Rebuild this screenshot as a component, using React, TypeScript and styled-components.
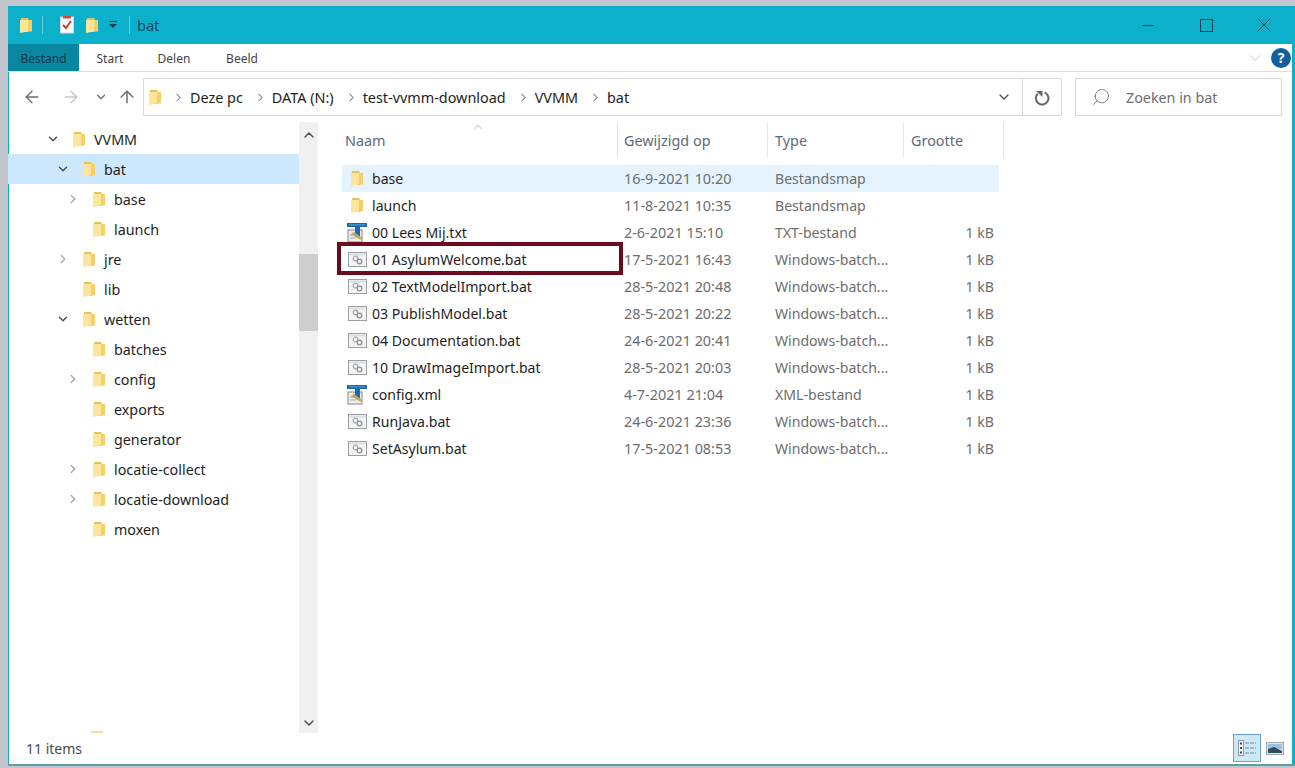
import React from 'react'
import styled, { createGlobalStyle } from 'styled-components'
import { ArrowLeft, ArrowRight, ArrowUp, ChevronDown, ChevronRight, ChevronUp, Search, X } from 'lucide-react'

const GlobalStyle = createGlobalStyle`
  html, body { margin: 0; padding: 0; height: 100%; }
  body {
    background: #c3c7cd;
    font-family: 'Noto Sans', 'Open Sans', sans-serif;
    overflow: hidden;
  }
  #root { height: 100%; }
`

const Desktop = styled.div`
  height: 768px;
  box-sizing: border-box;
  padding: 6px 0 2px 8px;
`

const Window = styled.div`
  height: 100%;
  display: flex;
  flex-direction: column;
  background: #0cb0cb;
  padding-right: 3px;
  border-bottom: 2px solid #5e9ea8;
  box-sizing: border-box;
`

const TitleBar = styled.div`
  height: 38px;
  flex: none;
  display: flex;
  align-items: center;
  margin-right: -3px;
  padding: 0 2px 0 12px;
  box-sizing: border-box;
  color: #0b4a60;
  font-size: 14.5px;
`

const TitleDivider = styled.span<{ $left: number; $right: number }>`
  width: 1px;
  height: 18px;
  background: #63cfe0;
  margin: 0 ${p => p.$right}px 0 ${p => p.$left}px;
`

const TitleGap = styled.span<{ $width: number }>`
  width: ${p => p.$width}px;
`

const TitleSpacer = styled.div`
  flex: 1;
`

const WindowButton = styled.div`
  width: 58px;
  display: flex;
  justify-content: center;
  color: #123f50;
`

const Body = styled.div`
  flex: 1;
  min-height: 0;
  display: flex;
  flex-direction: column;
  background: #fff;
  box-shadow: inset 1px 0 #0cb0cb;
`

const Ribbon = styled.div`
  height: 28px;
  flex: none;
  display: flex;
  align-items: stretch;
  box-sizing: border-box;
  font-size: 12px;
  color: #444;
  border-bottom: 1px solid #dfdfdf;
`

const RibbonTab = styled.div<{ $active?: boolean; $width: number }>`
  width: ${p => p.$width}px;
  display: flex;
  align-items: center;
  justify-content: center;
  padding-top: 2px;
  box-sizing: border-box;
  background: ${p => (p.$active ? '#0a87a0' : 'transparent')};
  color: ${p => (p.$active ? '#0f3a48' : '#444')};
`

const RibbonRight = styled.div`
  margin-left: auto;
  display: flex;
  align-items: center;
  gap: 7px;
  color: #c4c4c4;
`

const HelpBadge = styled.div`
  width: 20px;
  height: 20px;
  border-radius: 50%;
  background: #14609f;
  color: #fff;
  font-size: 14px;
  font-weight: 700;
  display: flex;
  align-items: center;
  justify-content: center;
  margin-right: 1px;
`

const NavBar = styled.div`
  height: 50px;
  flex: none;
  box-sizing: border-box;
  padding: 6px 0 6px 0;
  display: flex;
  align-items: stretch;
`

const NavButtons = styled.div`
  width: 135px;
  flex: none;
  display: flex;
  align-items: center;
`

const NavButton = styled.div<{ $width: number; $color: string }>`
  width: ${p => p.$width}px;
  display: flex;
  justify-content: center;
  color: ${p => p.$color};
`

const AddressBox = styled.div`
  width: 919px;
  flex: none;
  display: flex;
  align-items: center;
  border: 1px solid #d9d9d9;
  box-sizing: border-box;
  font-size: 14.4px;
  color: #1e1e1e;
  padding-left: 5px;
`

const Crumb = styled.span`
  margin-left: 5px;
`

const CrumbSep = styled.span`
  display: flex;
  margin-left: 11px;
  color: #555;
`

const AddressEnd = styled.div`
  margin-left: auto;
  display: flex;
  align-items: stretch;
  height: 100%;
  color: #555;
`

const AddressDrop = styled.div`
  width: 36px;
  display: flex;
  align-items: center;
  justify-content: center;
`

const Refresh = styled.div`
  width: 38px;
  display: flex;
  align-items: center;
  justify-content: center;
  border-left: 1px solid #d9d9d9;
  color: #666;
`

const SearchBox = styled.div`
  width: 207px;
  flex: none;
  margin-left: 13px;
  border: 1px solid #d9d9d9;
  box-sizing: border-box;
  display: flex;
  align-items: center;
  padding-left: 15px;
  gap: 15px;
  font-size: 14.3px;
  color: #6d6d6d;
`

const MirroredIcon = styled.span`
  display: flex;
  transform: scaleX(-1);
  color: #777;
`

const Main = styled.div`
  flex: 1;
  min-height: 0;
  display: flex;
`

const Tree = styled.div`
  width: 291px;
  flex: none;
  overflow: hidden;
  padding-top: 2px;
  box-sizing: border-box;
`

const TreeRow = styled.div<{ $depth: number; $selected?: boolean }>`
  height: 30px;
  display: flex;
  align-items: center;
  padding-left: ${p => 38 + p.$depth * 10}px;
  background: ${p => (p.$selected ? '#cce8ff' : 'transparent')};
  font-size: 14.3px;
  color: #1e1e1e;
`

const TreeChevron = styled.span<{ $open?: boolean }>`
  width: 14px;
  height: 16px;
  flex: none;
  display: flex;
  justify-content: center;
  color: ${p => (p.$open ? '#3c4a55' : '#a6a6a6')};
`

const TreeFolder = styled.span`
  display: flex;
  margin: 0 9px 0 13px;
`

const TreeStub = styled.div`
  height: 2px;
  width: 12px;
  margin: 187px 0 0 83px;
  background: #f5e08e;
`

const ScrollBar = styled.div`
  width: 19px;
  flex: none;
  background: #f0f0f0;
  display: flex;
  flex-direction: column;
  align-items: center;
  color: #505050;
`

const ScrollEnd = styled.div<{ $height: number }>`
  height: ${p => p.$height}px;
  flex: none;
  display: flex;
  align-items: center;
  justify-content: center;
`

const ScrollThumb = styled.div`
  width: 100%;
  height: 77px;
  margin-top: 106px;
  margin-bottom: auto;
  background: #cdcdcd;
`

const List = styled.div`
  flex: 1;
  padding-left: 24px;
`

const Grid = styled.div`
  display: grid;
  grid-template-columns: 275px 150px 136px 96px;
  width: 657px;
`

const Header = styled.div`
  display: grid;
  grid-template-columns: 276px 150px 136px 100px;
  height: 43px;
  align-items: start;
`

const HeaderCell = styled.div<{ $pad: number }>`
  position: relative;
  height: 34px;
  margin-top: 1px;
  display: flex;
  align-items: center;
  box-sizing: border-box;
  padding-left: ${p => p.$pad}px;
  border-right: 1px solid #e5e5e5;
  font-size: 14.4px;
  color: #5a6b7b;
`

const SortCaret = styled.span`
  position: absolute;
  left: 129px;
  top: -3px;
  display: flex;
  color: #8e8e8e;
`

const Row = styled(Grid)<{ $hovered?: boolean; $marked?: boolean }>`
  position: relative;
  height: 27px;
  align-items: center;
  background: ${p => (p.$hovered ? '#e5f3ff' : 'transparent')};
  font-size: 14.1px;
  color: #6d6d6d;
  ${p =>
    p.$marked
      ? `&::after {
    content: '';
    position: absolute;
    left: -5px;
    top: -4px;
    width: 286px;
    height: 33px;
    box-sizing: border-box;
    border: 4px solid #6e0a1e;
  }`
      : ''}
`

const NameCell = styled.div`
  display: flex;
  align-items: center;
  color: #1e1e1e;
`

const IconSlot = styled.span`
  width: 20px;
  margin: 0 5px;
  display: flex;
  justify-content: center;
`

const DateCell = styled.div`
  padding-left: 7px;
  font-size: 14.4px;
`

const TypeCell = styled.div`
  padding-left: 8px;
`

const SizeCell = styled.div`
  text-align: right;
  padding-right: 5px;
`

const StatusBar = styled.div`
  height: 31px;
  flex: none;
  display: flex;
  align-items: center;
  box-sizing: border-box;
  padding: 0 3px 1px 18px;
  font-size: 14px;
  color: #4a4a4a;
`

const ViewButtons = styled.div`
  margin-left: auto;
  display: flex;
  align-items: center;
`

const ViewButton = styled.div<{ $active?: boolean }>`
  width: 28px;
  height: 28px;
  box-sizing: border-box;
  display: flex;
  align-items: center;
  justify-content: center;
  background: ${p => (p.$active ? '#cde8f6' : 'transparent')};
  border: 1px solid ${p => (p.$active ? '#6aa5bd' : 'transparent')};
`

const FolderIcon = () => (
  <svg width="12" height="17" viewBox="0 0 12 17">
    <path d="M1 1h7l1 2v12H1z" fill="#e6c25a" />
    <path d="M0 3h8v11.500l-8 1.500z" fill="#fde59b" />
    <path d="M8 3h4v11.500H8z" fill="#f6cf69" />
  </svg>
)

const BatIcon = () => (
  <svg width="19" height="15" viewBox="0 0 19 15">
    <rect x="0.5" y="0.500" width="18" height="14" fill="#f4f4f4" stroke="#9a9fa4" />
    <rect x="1.500" y="1.500" width="16" height="2" fill="#d9dde0" />
    <circle cx="7.500" cy="6.500" r="2.300" fill="none" stroke="#a6abb0" strokeWidth="1.300" />
    <circle cx="11.500" cy="9.500" r="2.300" fill="none" stroke="#8b9196" strokeWidth="1.300" />
  </svg>
)

const NotepadIcon = () => (
  <svg width="20" height="20" viewBox="0 0 20 20">
    <rect x="1" y="7" width="14" height="12" fill="#eceff1" stroke="#7d858c" />
    <path d="M0 0h20v4h-7v9H8V4H0z" fill="#1e6aa8" />
    <path d="M2 1h16v1.500H2z" fill="#3c91d0" />
    <path d="M4 11l8 5 3 1-1-3-7-5z" fill="#c9a64b" />
    <path d="M3 12h7M3 15h6" stroke="#9aa3aa" />
  </svg>
)

const ChecklistIcon = () => (
  <svg width="14" height="18" viewBox="0 0 14 18">
    <rect x="0.500" y="1" width="13" height="16" fill="#fdfdfd" stroke="#d5d5d5" />
    <rect x="3" y="0" width="8" height="2.500" fill="#d04a3f" />
    <path d="M3 9l3 3 5-7" fill="none" stroke="#c8352e" strokeWidth="1.800" />
  </svg>
)

const DropArrowIcon = () => (
  <svg width="10" height="8" viewBox="0 0 10 8">
    <path d="M1 0.500h8" stroke="#123f50" />
    <path d="M1 3h8L5 7z" fill="#123f50" />
  </svg>
)

const MinimizeIcon = () => (
  <svg width="12" height="12" viewBox="0 0 12 12">
    <path d="M0 6.500h12" stroke="currentColor" />
  </svg>
)

const MaximizeIcon = () => (
  <svg width="13" height="13" viewBox="0 0 13 13">
    <rect x="0.500" y="0.500" width="12" height="12" fill="none" stroke="currentColor" />
  </svg>
)

const RefreshIcon = () => (
  <svg width="16" height="17" viewBox="0 0 16 17">
    <path d="M10.500 3.400a6.300 6.300 0 1 1-6.800 1.400" fill="none" stroke="currentColor" strokeWidth="2" />
    <path d="M2 2h6.500v6z" fill="currentColor" />
  </svg>
)

const DetailsViewIcon = () => (
  <svg width="18" height="16" viewBox="0 0 18 16">
    <rect x="0.500" y="0.500" width="5" height="15" fill="#f4f4f4" stroke="#8f9aa2" />
    <path d="M2 2.500h2v2H2zM2 7h2v2H2zM2 11.500h2v2H2z" fill="#444" />
    <path d="M7 3h11M7 8h11M7 13h11" stroke="#7b8790" strokeDasharray="4 1" />
  </svg>
)

const PreviewViewIcon = () => (
  <svg width="18" height="13" viewBox="0 0 18 13">
    <rect x="0.500" y="0.500" width="17" height="12" fill="#dfe5ea" stroke="#9aa4ab" />
    <rect x="2" y="2" width="14" height="5" fill="#9fc0d6" />
    <path d="M2 7l6-2 8 4v2H2z" fill="#2f4d5e" />
  </svg>
)

type TreeItem = { label: string; depth: number; chevron?: 'open' | 'closed'; selected?: boolean }

const treeItems: TreeItem[] = [
  { label: 'VVMM', depth: 0, chevron: 'open' },
  { label: 'bat', depth: 1, chevron: 'open', selected: true },
  { label: 'base', depth: 2, chevron: 'closed' },
  { label: 'launch', depth: 2 },
  { label: 'jre', depth: 1, chevron: 'closed' },
  { label: 'lib', depth: 1 },
  { label: 'wetten', depth: 1, chevron: 'open' },
  { label: 'batches', depth: 2 },
  { label: 'config', depth: 2, chevron: 'closed' },
  { label: 'exports', depth: 2 },
  { label: 'generator', depth: 2 },
  { label: 'locatie-collect', depth: 2, chevron: 'closed' },
  { label: 'locatie-download', depth: 2, chevron: 'closed' },
  { label: 'moxen', depth: 2 },
]

type FileItem = { name: string; date: string; type: string; size?: string; kind: 'folder' | 'bat' | 'note' }

const files: FileItem[] = [
  { name: 'base', date: '16-9-2021 10:20', type: 'Bestandsmap', kind: 'folder' },
  { name: 'launch', date: '11-8-2021 10:35', type: 'Bestandsmap', kind: 'folder' },
  { name: '00 Lees Mij.txt', date: '2-6-2021 15:10', type: 'TXT-bestand', size: '1 kB', kind: 'note' },
  { name: '01 AsylumWelcome.bat', date: '17-5-2021 16:43', type: 'Windows-batch...', size: '1 kB', kind: 'bat' },
  { name: '02 TextModelImport.bat', date: '28-5-2021 20:48', type: 'Windows-batch...', size: '1 kB', kind: 'bat' },
  { name: '03 PublishModel.bat', date: '28-5-2021 20:22', type: 'Windows-batch...', size: '1 kB', kind: 'bat' },
  { name: '04 Documentation.bat', date: '24-6-2021 20:41', type: 'Windows-batch...', size: '1 kB', kind: 'bat' },
  { name: '10 DrawImageImport.bat', date: '28-5-2021 20:03', type: 'Windows-batch...', size: '1 kB', kind: 'bat' },
  { name: 'config.xml', date: '4-7-2021 21:04', type: 'XML-bestand', size: '1 kB', kind: 'note' },
  { name: 'RunJava.bat', date: '24-6-2021 23:36', type: 'Windows-batch...', size: '1 kB', kind: 'bat' },
  { name: 'SetAsylum.bat', date: '17-5-2021 08:53', type: 'Windows-batch...', size: '1 kB', kind: 'bat' },
]

const crumbs = ['Deze pc', 'DATA (N:)', 'test-vvmm-download', 'VVMM', 'bat']

const fileIcon = (kind: FileItem['kind']) => {
  if (kind === 'folder') return <FolderIcon />
  if (kind === 'note') return <NotepadIcon />
  return <BatIcon />
}

const App = () => (
  <Desktop>
    <GlobalStyle />
    <Window>
      <TitleBar>
        <FolderIcon />
        <TitleDivider $left={10} $right={10} />
        <TitleGap $width={7} />
        <ChecklistIcon />
        <TitleGap $width={12} />
        <FolderIcon />
        <TitleGap $width={10} />
        <DropArrowIcon />
        <TitleDivider $left={11} $right={7} />
        bat
        <TitleSpacer />
        <WindowButton><MinimizeIcon /></WindowButton>
        <WindowButton><MaximizeIcon /></WindowButton>
        <WindowButton><X size={24} strokeWidth={1} /></WindowButton>
      </TitleBar>
      <Body>
        <Ribbon>
          <RibbonTab $active $width={71}>Bestand</RibbonTab>
          <RibbonTab $width={62}>Start</RibbonTab>
          <RibbonTab $width={66}>Delen</RibbonTab>
          <RibbonTab $width={70}>Beeld</RibbonTab>
          <RibbonRight>
            <ChevronDown size={18} strokeWidth={1.2} />
            <HelpBadge>?</HelpBadge>
          </RibbonRight>
        </Ribbon>
        <NavBar>
          <NavButtons>
            <NavButton $width={48} $color="#6e6e6e"><ArrowLeft size={20} strokeWidth={1.6} /></NavButton>
            <NavButton $width={30} $color="#c6c6c6"><ArrowRight size={20} strokeWidth={1.6} /></NavButton>
            <NavButton $width={30} $color="#6e6e6e"><ChevronDown size={14} strokeWidth={2.2} /></NavButton>
            <NavButton $width={22} $color="#6e6e6e"><ArrowUp size={20} strokeWidth={1.8} /></NavButton>
          </NavButtons>
          <AddressBox>
            <FolderIcon />
            {crumbs.map(crumb => (
              <React.Fragment key={crumb}>
                <CrumbSep><ChevronRight size={13} strokeWidth={1.8} /></CrumbSep>
                <Crumb>{crumb}</Crumb>
              </React.Fragment>
            ))}
            <AddressEnd>
              <AddressDrop><ChevronDown size={16} strokeWidth={2.2} /></AddressDrop>
              <Refresh><RefreshIcon /></Refresh>
            </AddressEnd>
          </AddressBox>
          <SearchBox>
            <MirroredIcon><Search size={20} strokeWidth={1.1} /></MirroredIcon>
            Zoeken in bat
          </SearchBox>
        </NavBar>
        <Main>
          <Tree>
            {treeItems.map(item => (
              <TreeRow key={`${item.label}-${item.depth}`} $depth={item.depth} $selected={item.selected}>
                <TreeChevron $open={item.chevron === 'open'}>
                  {item.chevron === 'open' && <ChevronDown size={16} strokeWidth={2.2} />}
                  {item.chevron === 'closed' && <ChevronRight size={16} strokeWidth={2.2} />}
                </TreeChevron>
                <TreeFolder><FolderIcon /></TreeFolder>
                {item.label}
              </TreeRow>
            ))}
            <TreeStub />
          </Tree>
          <ScrollBar>
            <ScrollEnd $height={26}><ChevronUp size={16} strokeWidth={2.2} /></ScrollEnd>
            <ScrollThumb />
            <ScrollEnd $height={20}><ChevronDown size={16} strokeWidth={2.2} /></ScrollEnd>
          </ScrollBar>
          <List>
            <Header>
              <HeaderCell $pad={3}>
                Naam
                <SortCaret><ChevronUp size={14} strokeWidth={1} /></SortCaret>
              </HeaderCell>
              <HeaderCell $pad={6}>Gewijzigd op</HeaderCell>
              <HeaderCell $pad={7}>Type</HeaderCell>
              <HeaderCell $pad={7}>Grootte</HeaderCell>
            </Header>
            {files.map((file, i) => (
              <Row key={file.name} $hovered={i === 0} $marked={file.name.startsWith('01')}>
                <NameCell>
                  <IconSlot>{fileIcon(file.kind)}</IconSlot>
                  {file.name}
                </NameCell>
                <DateCell>{file.date}</DateCell>
                <TypeCell>{file.type}</TypeCell>
                <SizeCell>{file.size}</SizeCell>
              </Row>
            ))}
          </List>
        </Main>
        <StatusBar>
          11 items
          <ViewButtons>
            <ViewButton $active><DetailsViewIcon /></ViewButton>
            <ViewButton><PreviewViewIcon /></ViewButton>
          </ViewButtons>
        </StatusBar>
      </Body>
    </Window>
  </Desktop>
)

export default App
